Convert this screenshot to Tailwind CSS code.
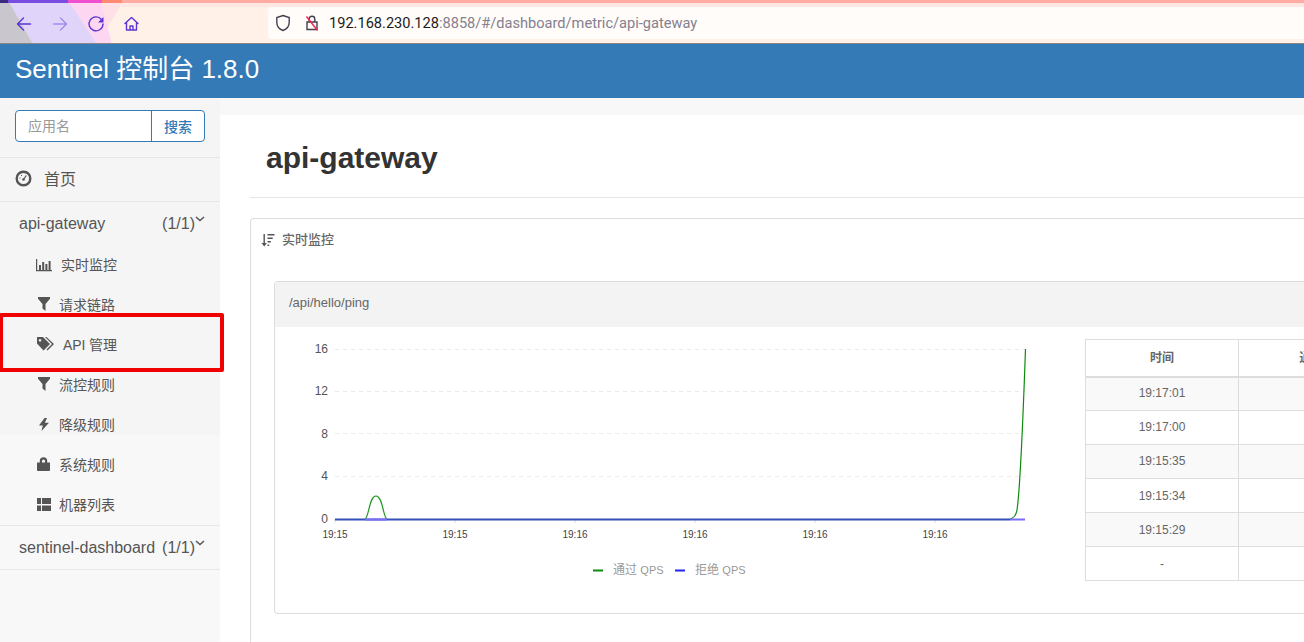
<!DOCTYPE html>
<html lang="zh">
<head>
<meta charset="utf-8">
<script src="https://cdn.jsdelivr.net/npm/@tailwindcss/browser@4"></script>
<title>Sentinel 控制台</title>
</head>
<body class="w-[1304px] h-[642px] overflow-hidden bg-white font-['Liberation_Sans','Noto_Sans_CJK_SC',sans-serif] text-[#555]">

<!-- browser toolbar -->
<div class="relative h-[44px] bg-[#fff1e7] border-b border-[#8c8684] overflow-hidden">
  <svg class="absolute left-0 top-0" width="300" height="44" viewBox="0 0 300 44">
    <polygon points="122,0 300,0 300,44 98,44" fill="#fff0e8"/>
    <polygon points="100,0 122,3 98,44 97,44" fill="#ffe0e4"/>
    <polygon points="68,0 100,0 112,44 97,44" fill="#fdd6f2"/>
    <polygon points="8,0 68,0 97,44 33,44" fill="#e0d4fa"/>
    <polygon points="0,0 8,0 33,44 0,44" fill="#c9c7cd"/>
    <rect x="0" y="0" width="8" height="3" fill="#3a2a80"/>
    <rect x="8" y="0" width="60" height="3" fill="#7a4de0"/>
    <rect x="68" y="0" width="34" height="3" fill="#f050d0"/>
    <rect x="102" y="0" width="20" height="3" fill="#ff8a72"/>
    <g fill="none" stroke="#5b35d5" stroke-width="1.4" stroke-linecap="round" stroke-linejoin="round">
      <path d="M17.5 24h13M23.5 18l-6 6 6 6"/>
      <path d="M53.5 24h13M60.5 18l6 6-6 6" opacity=".45"/>
      <path d="M101.5 19.5a7 7 0 1 0 1.5 4.5"/>
      <path d="M125 23.5l6.5-6 6.5 6M126.5 22v8h10v-8M130 30v-4h3v4"/>
    </g>
    <path d="M103.5 17v5.5h-5.5z" fill="#5b35d5"/>
  </svg>
  <div class="absolute left-[122px] right-0 top-0 h-[3px] bg-[#ffaaa2]"></div>
  <div class="absolute left-[122px] right-0 top-[3px] h-[4px] bg-[#ffe8e4]"></div>
  <div class="absolute left-[268px] right-0 top-[7px] h-[32px] bg-[#fffcf9] rounded-l-[4px] flex items-center pl-[7px]">
    <svg width="16" height="18" viewBox="0 0 16 18" fill="none" stroke="#45404f" stroke-width="1.4"><path d="M8 1.5l6.2 2v5c0 3.8-2.600 6.600-6.200 8-3.600-1.400-6.200-4.200-6.200-8v-5z"/></svg>
    <svg class="ml-[13px]" width="16" height="18" viewBox="0 0 16 18" fill="none"><path d="M3 8h10v7.500H3zM5.200 8V5a2.800 2.800 0 0 1 5.600 0v3" stroke="#45404f" stroke-width="1.400"/><path d="M2.500 2.500l11 14" stroke="#f0285a" stroke-width="1.500"/></svg>
    <span class="ml-[9px] text-[14.600px] leading-none text-[#1c1b22] font-['Roboto',sans-serif]">192.168.230.128<span class="text-[#85808e]">:8858/#/dashboard/metric/api-gateway</span></span>
  </div>
</div>

<!-- app header -->
<header class="h-[54px] bg-[#337ab7] flex items-center pl-[15px] pb-[4px] text-[26px] leading-none text-white">Sentinel 控制台 1.8.0</header>

<div class="relative flex h-[544px]">
  <!-- sidebar -->
  <aside class="w-[220px] shrink-0 bg-[linear-gradient(#f5f5f5_337px,#f8f8f8_337px)]">
    <div class="h-[60px] border-b border-[#e7e7e7] px-[15px] pt-[12px]">
      <div class="flex h-[32px] w-[190px] bg-white border border-[#337ab7] rounded-[4px]">
        <div class="w-[135px] pl-[12px] pt-[1px] flex items-center text-[14px] text-[#999]">应用名</div>
        <div class="flex-1 border-l border-[#337ab7] pt-[2px] flex items-center justify-center text-[14px] font-medium text-[#337ab7]">搜索</div>
      </div>
    </div>
    <div class="h-[44px] border-b border-[#e7e7e7] flex items-center pl-[15px]">
      <svg class="-mt-[3px]" width="17" height="17" viewBox="0 0 17 17" fill="none"><circle cx="8.500" cy="8.500" r="6.800" stroke="#555" stroke-width="2.400"/><circle cx="8.500" cy="9.500" r="1.300" fill="#555"/><path d="M8.500 9.500l2.800-4" stroke="#555" stroke-width="1.200"/><path d="M4.500 8h1M6 5.500h1" stroke="#555"/></svg>
      <span class="ml-[12px] text-[16px]">首页</span>
    </div>
    <div class="h-[44px] flex items-center pl-[19px] pr-[15px] pb-[1px] text-[16px]">
      <span>api-gateway</span><span class="ml-auto">(1/1)</span>
      <svg class="-mt-[10px]" width="10" height="8" viewBox="0 0 10 8" fill="none" stroke="#555" stroke-width="1.500"><path d="M1 2l4 3.500L9 2"/></svg>
    </div>
    <nav class="text-[14px] -mt-[1px]">
      <a class="h-[40px] flex items-center pl-[36px]">
        <svg width="17" height="14" viewBox="0 0 17 14" fill="#555"><path d="M0 1h1.200v11H16v1.200H0z"/><path d="M3 7h2v5H3zM6.200 4h2v8h-2zM9.400 6h2v6h-2zM12.600 3h2v9h-2z"/></svg>
        <span class="ml-[8px]">实时监控</span>
      </a>
      <a class="h-[40px] flex items-center pl-[38px]">
        <svg class="-mt-[3px]" width="12" height="14" viewBox="0 0 12 14" fill="#555"><path d="M0 0h12v1.800L7.500 7v7L4.500 11.500V7L0 1.800z"/></svg>
        <span class="ml-[9px]">请求链路</span>
      </a>
      <a class="h-[40px] flex items-center pl-[37px]">
        <svg class="-mt-[3px]" width="18" height="14" viewBox="0 0 18 14" fill="#555"><path d="M0 0h6l7 7-6.500 6.500L0 6.500zM3 2a1.300 1.300 0 1 0 .01 0z" fill-rule="evenodd"/><path d="M8 0h1.500l7.500 7-6.500 6.500-1-1L15 7z"/></svg>
        <span class="ml-[8px] tracking-[-0.1px]">API 管理</span>
      </a>
      <a class="h-[40px] flex items-center pl-[38px]">
        <svg class="-mt-[3px]" width="12" height="14" viewBox="0 0 12 14" fill="#555"><path d="M0 0h12v1.800L7.500 7v7L4.500 11.500V7L0 1.800z"/></svg>
        <span class="ml-[9px]">流控规则</span>
      </a>
      <a class="h-[40px] flex items-center pl-[39px]">
        <svg class="-mt-[1px]" width="10" height="13" viewBox="0 0 10 13" fill="#555"><path d="M5.500 0L0 7.500h3.800L2.500 13 10 4.800H5.800L8 0z"/></svg>
        <span class="ml-[10px]">降级规则</span>
      </a>
      <a class="h-[40px] flex items-center pl-[37px]">
        <svg class="-mt-[3px]" width="13" height="14" viewBox="0 0 13 14" fill="#555"><path d="M0 5.500h2.800V4a3.700 3.700 0 0 1 7.400 0v1.500H13V13.200a.8.8 0 0 1-.8.800H.8a.8.8 0 0 1-.8-.8zM5 5.500h3V4a1.500 1.500 0 0 0-3 0z" fill-rule="evenodd"/></svg>
        <span class="ml-[9px]">系统规则</span>
      </a>
      <a class="h-[40px] flex items-center pl-[37px]">
        <svg class="-mt-[1px]" width="14" height="13" viewBox="0 0 14 13" fill="#555"><path d="M0 0h4v6H0zM0 7.500h4V13H0zM5 0h9v6H5zM5 7.500h9V13H5z"/></svg>
        <span class="ml-[8px]">机器列表</span>
      </a>
    </nav>
    <div class="h-[45px] border-y border-[#e7e7e7] flex items-center pl-[19px] pr-[15px] text-[16px]">
      <span>sentinel-dashboard</span><span class="ml-auto">(1/1)</span>
      <svg class="-mt-[10px]" width="10" height="8" viewBox="0 0 10 8" fill="none" stroke="#555" stroke-width="1.500"><path d="M1 2l4 3.500L9 2"/></svg>
    </div>
  </aside>

  <!-- main content -->
  <main class="flex-1 min-w-0 bg-[#f8f8f8] pt-[17px]">
    <div class="h-full bg-white pl-[30px]">
      <div class="h-[83px] border-b border-[#e5e5e5] pl-[16px] pt-[26px] text-[30px] leading-[34px] font-bold text-[#333]">api-gateway</div>
      <section class="mt-[20px] h-[500px] border border-r-0 border-[#ddd] rounded-l-[4px]">
        <div class="h-[42px] flex items-center pl-[10px] text-[13px] font-medium text-[#666]">
          <svg width="14" height="14" viewBox="0 0 14 14" fill="#555"><path d="M2.500 1h1.400v9h2L3.200 13.500.5 10h2z"/><path d="M6.500 1h7v1.600h-7zM6.500 4.500h5.200v1.600H6.500zM6.500 8h3.400v1.600H6.500zM6.500 11.500h1.700v1.600H6.500z"/></svg>
          <span class="ml-[7px]">实时监控</span>
        </div>
        <article class="ml-[23px] mt-[20px] h-[333px] border border-r-0 border-[#ddd] rounded-l-[4px]">
          <div class="h-[45px] bg-[#f3f3f3] flex items-center pl-[14px] pb-[4px] text-[13px] text-[#666]">/api/hello/ping</div>
          <div class="flex">
            <svg class="shrink-0" width="810" height="251" viewBox="275 327 810 251" font-size="12" fill="#555" font-family="Liberation Sans, sans-serif">
              <g stroke="#e9e9e9" stroke-dasharray="4 4" fill="none">
                <path d="M335 349.500H1025M335 391.500H1025M335 433.500H1025M335 476.500H1025"/>
              </g>
              <g text-anchor="end">
                <text x="328" y="352.500">16</text>
                <text x="328" y="394.500">12</text>
                <text x="328" y="437.500">8</text>
                <text x="328" y="479.500">4</text>
                <text x="328" y="523">0</text>
              </g>
              <g stroke="#ddd"><path d="M335 519v4M455 519v4M575 519v4M695 519v4M815 519v4M935 519v4"/></g>
              <g fill="none" stroke-width="1.200">
                <path d="M365 519C369 518 369 496 376 496C383 496 383 518 387 519" stroke="#1f961f"/>
                <path d="M1010 519C1014 518 1016 516 1017 510C1020 490 1023 420 1025.500 349" stroke="#0f8a0f"/>
              </g>
              <path d="M335 519.500H1010" stroke="#3550b8" stroke-width="2"/>
              <path d="M365 519.500H387M1010 519.500H1025" stroke="#7a6cf5" stroke-width="2"/>
              <g font-size="10" text-anchor="middle" fill="#444">
                <text x="335" y="538">19:15</text>
                <text x="455" y="538">19:15</text>
                <text x="575" y="538">19:16</text>
                <text x="695" y="538">19:16</text>
                <text x="815" y="538">19:16</text>
                <text x="935" y="538">19:16</text>
              </g>
              <path d="M593 570.500h10" stroke="#0f8a0f" stroke-width="2"/>
              <path d="M675 570.500h10" stroke="#2222ee" stroke-width="2"/>
              <g font-size="12" fill="#999" font-family="Liberation Sans, Noto Sans CJK SC, sans-serif">
                <text x="613" y="574">通过 <tspan font-size="11">QPS</tspan></text>
                <text x="695" y="574">拒绝 <tspan font-size="11">QPS</tspan></text>
              </g>
            </svg>
            <table class="mt-[12px] shrink-0 h-[242px] w-[327px] table-fixed border-collapse text-[12px] text-[#666] text-center">
              <thead>
                <tr class="h-[37px]"><th class="w-[153px] border border-b-2 border-[#ddd] font-bold">时间</th><th class="w-[174px] border border-b-2 border-[#ddd] font-bold">通过 QPS</th></tr>
              </thead>
              <tbody>
                <tr class="h-[34px] bg-[#f9f9f9]"><td class="border border-[#ddd] pb-[2px]">19:17:01</td><td class="border border-[#ddd]"></td></tr>
                <tr class="h-[34px]"><td class="border border-[#ddd] pb-[2px]">19:17:00</td><td class="border border-[#ddd]"></td></tr>
                <tr class="h-[34px] bg-[#f9f9f9]"><td class="border border-[#ddd] pb-[2px]">19:15:35</td><td class="border border-[#ddd]"></td></tr>
                <tr class="h-[34px]"><td class="border border-[#ddd]">19:15:34</td><td class="border border-[#ddd]"></td></tr>
                <tr class="h-[34px] bg-[#f9f9f9]"><td class="border border-[#ddd]">19:15:29</td><td class="border border-[#ddd]"></td></tr>
                <tr class="h-[34px]"><td class="border border-[#ddd]">-</td><td class="border border-[#ddd]"></td></tr>
              </tbody>
            </table>
          </div>
        </article>
      </section>
    </div>
  </main>

  <!-- red annotation box -->
  <div class="absolute -left-[1px] top-[215px] w-[225px] h-[59px] border-4 border-[#f00000] rounded-[2px]"></div>
</div>
</body>
</html>
